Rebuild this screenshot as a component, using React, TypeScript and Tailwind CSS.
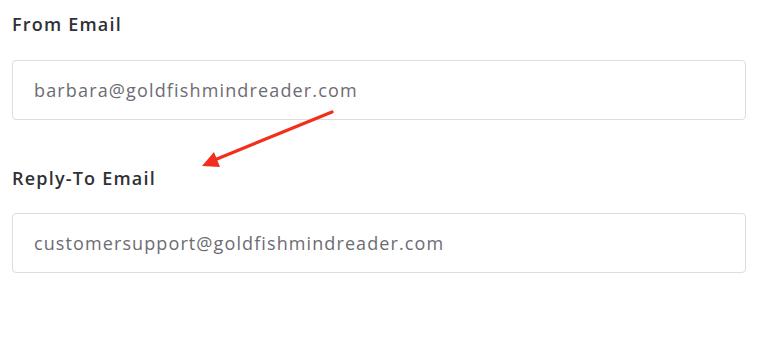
import React from "react";

export default function App() {
  const font = { fontFamily: '"Open Sans", "DejaVu Sans", sans-serif' };
  return (
    <div className="relative w-[768px] h-[340px] bg-white overflow-hidden" style={font}>
      <div className="flex flex-col pl-[12px] pr-[22px] pt-[12px]">
        <div className="h-[24px] leading-[24px] text-[18px] font-semibold tracking-[1.2px] text-[#303036]">From Email</div>
        <div className="mt-[24px] h-[60px] flex items-center rounded-[4px] border border-[#dcdce3] pl-[21px] text-[18px] tracking-[1.15px] text-[#6c6c73]">
          barbara@goldfishmindreader.com
        </div>
        <div className="mt-[46px] h-[24px] leading-[24px] text-[18px] font-semibold tracking-[1.2px] text-[#303036]">Reply-To Email</div>
        <div className="mt-[23px] h-[60px] flex items-center rounded-[4px] border border-[#dcdce3] pl-[21px] text-[18px] tracking-[1.1px] text-[#6c6c73]">
          customersupport@goldfishmindreader.com
        </div>
      </div>
      <svg className="absolute left-0 top-0" width="768" height="340" viewBox="0 0 768 340">
        <line x1="332" y1="112" x2="212" y2="161" stroke="#f22f1c" strokeWidth="3.2" strokeLinecap="round" />
        <polygon points="202,166 214,152 220,167" fill="#f22f1c" />
      </svg>
    </div>
  );
}
